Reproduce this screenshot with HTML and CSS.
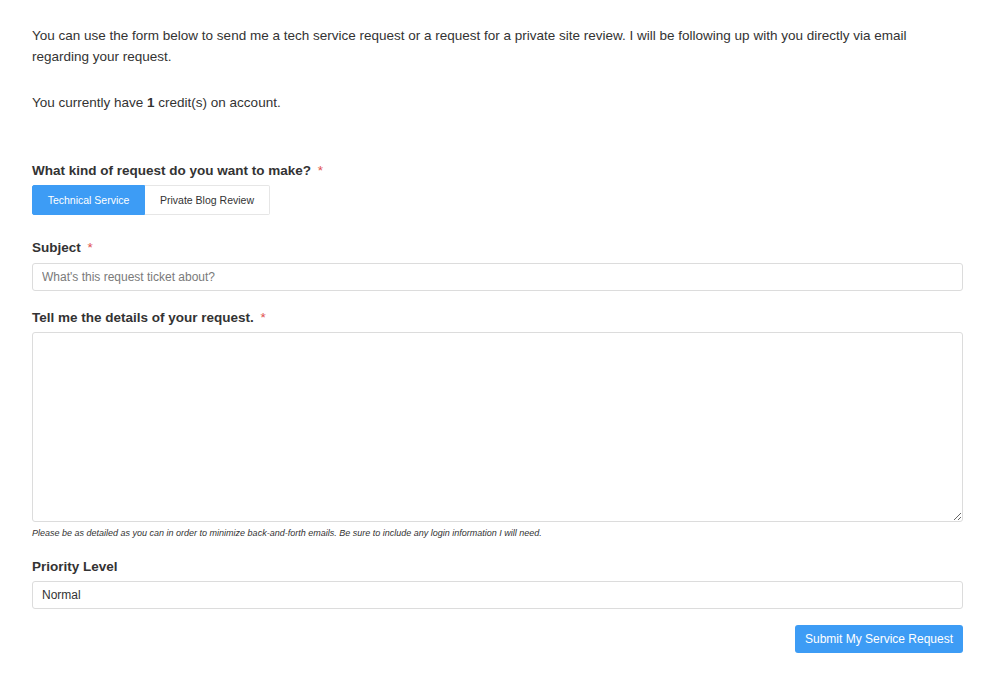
FILE: index.html
```html
<!DOCTYPE html>
<html lang="en">
<head>
<meta charset="utf-8">
<title>Service Request</title>
<link rel="stylesheet" href="styles.css">
</head>
<body>
<div class="page">
  <p class="intro">You can use the form below to send me a tech service request or a request for a private site review. I will be following up with you directly via email regarding your request.</p>
  <p class="credits">You currently have <strong>1</strong> credit(s) on account.</p>

  <form class="form">
    <div class="field field-type">
      <label class="label">What kind of request do you want to make? <span class="req">*</span></label>
      <div class="toggle">
        <button type="button" class="toggle-btn active">Technical Service</button>
        <button type="button" class="toggle-btn">Private Blog Review</button>
      </div>
    </div>

    <div class="field field-subject">
      <label class="label" for="subject">Subject <span class="req">*</span></label>
      <input id="subject" class="input" type="text" placeholder="What's this request ticket about?">
    </div>

    <div class="field field-details">
      <label class="label" for="details">Tell me the details of your request. <span class="req">*</span></label>
      <textarea id="details" class="textarea"></textarea>
      <div class="help">Please be as detailed as you can in order to minimize back-and-forth emails. Be sure to include any login information I will need.</div>
    </div>

    <div class="field field-priority">
      <label class="label" for="priority">Priority Level</label>
      <select id="priority" class="select">
        <option>Normal</option>
        <option>High</option>
        <option>Urgent</option>
      </select>
    </div>

    <div class="actions">
      <button type="submit" class="submit">Submit My Service Request</button>
    </div>
  </form>
</div>
</body>
</html>
```

FILE: styles.css
```css
* {
  box-sizing: border-box;
}

html, body {
  margin: 0;
  padding: 0;
  background: #ffffff;
}

body {
  font-family: "Liberation Sans", Arial, Helvetica, sans-serif;
  color: #333333;
  font-size: 13.5px;
}

.page {
  padding: 25px 37px 20px 32px;
}

.intro,
.credits {
  margin: 0 0 25px 0;
  font-size: 13.5px;
  line-height: 21px;
}

.credits {
  margin-bottom: 0;
}

.credits strong {
  font-weight: bold;
}

.form {
  margin-top: 48px;
}

.field {
  display: flex;
  flex-direction: column;
}

.label {
  display: block;
  font-weight: bold;
  font-size: 13.5px;
  line-height: 20px;
  color: #333333;
}

.req {
  color: #e0504d;
  font-weight: normal;
  margin-left: 3px;
}

.field-type .label {
  margin-bottom: 4px;
}

.toggle {
  display: flex;
}

.toggle-btn {
  font-family: "Liberation Sans", Arial, Helvetica, sans-serif;
  font-size: 10.5px;
  height: 30px;
  padding: 0;
  white-space: nowrap;
  text-align: center;
  border: 1px solid #e6e6e6;
  background: #ffffff;
  color: #333333;
  margin: 0;
  cursor: pointer;
}

.toggle-btn:first-child {
  border-radius: 2px 0 0 2px;
  width: 113px;
}

.toggle-btn:last-child {
  border-radius: 0 2px 2px 0;
  border-left: 0;
  width: 125px;
}

.toggle-btn.active {
  background: #3d9cf5;
  border-color: #3d9cf5;
  color: #ffffff;
}

.field-subject {
  margin-top: 23px;
}

.field-subject .label {
  margin-bottom: 5px;
}

.field-priority .label {
  margin-bottom: 4px;
}

.input,
.select {
  display: block;
  width: 100%;
  height: 28px;
  padding: 0 9px;
  font-family: "Liberation Sans", Arial, Helvetica, sans-serif;
  font-size: 12px;
  color: #333333;
  background: #ffffff;
  border: 1px solid #dcdcdc;
  border-radius: 3px;
  outline: none;
}

.input::placeholder {
  color: #7a7a7a;
}

.select {
  -webkit-appearance: none;
  appearance: none;
}

.field-details {
  margin-top: 17px;
}

.field-details .label {
  margin-bottom: 4px;
}

.textarea {
  display: block;
  width: 100%;
  height: 190px;
  border: 1px solid #dcdcdc;
  border-radius: 3px;
  font-family: "Liberation Sans", Arial, Helvetica, sans-serif;
  font-size: 12px;
  padding: 6px 9px;
  outline: none;
  resize: vertical;
}

.help {
  margin-top: 6px;
  font-size: 9px;
  line-height: 11px;
  font-style: italic;
  color: #333333;
}

.field-priority {
  margin-top: 18px;
}

.actions {
  display: flex;
  justify-content: flex-end;
  margin-top: 16px;
}

.submit {
  height: 28px;
  width: 168px;
  padding: 0;
  font-family: "Liberation Sans", Arial, Helvetica, sans-serif;
  font-size: 12px;
  color: #ffffff;
  background: #3d9cf5;
  border: 0;
  border-radius: 3px;
  cursor: pointer;
}
```
